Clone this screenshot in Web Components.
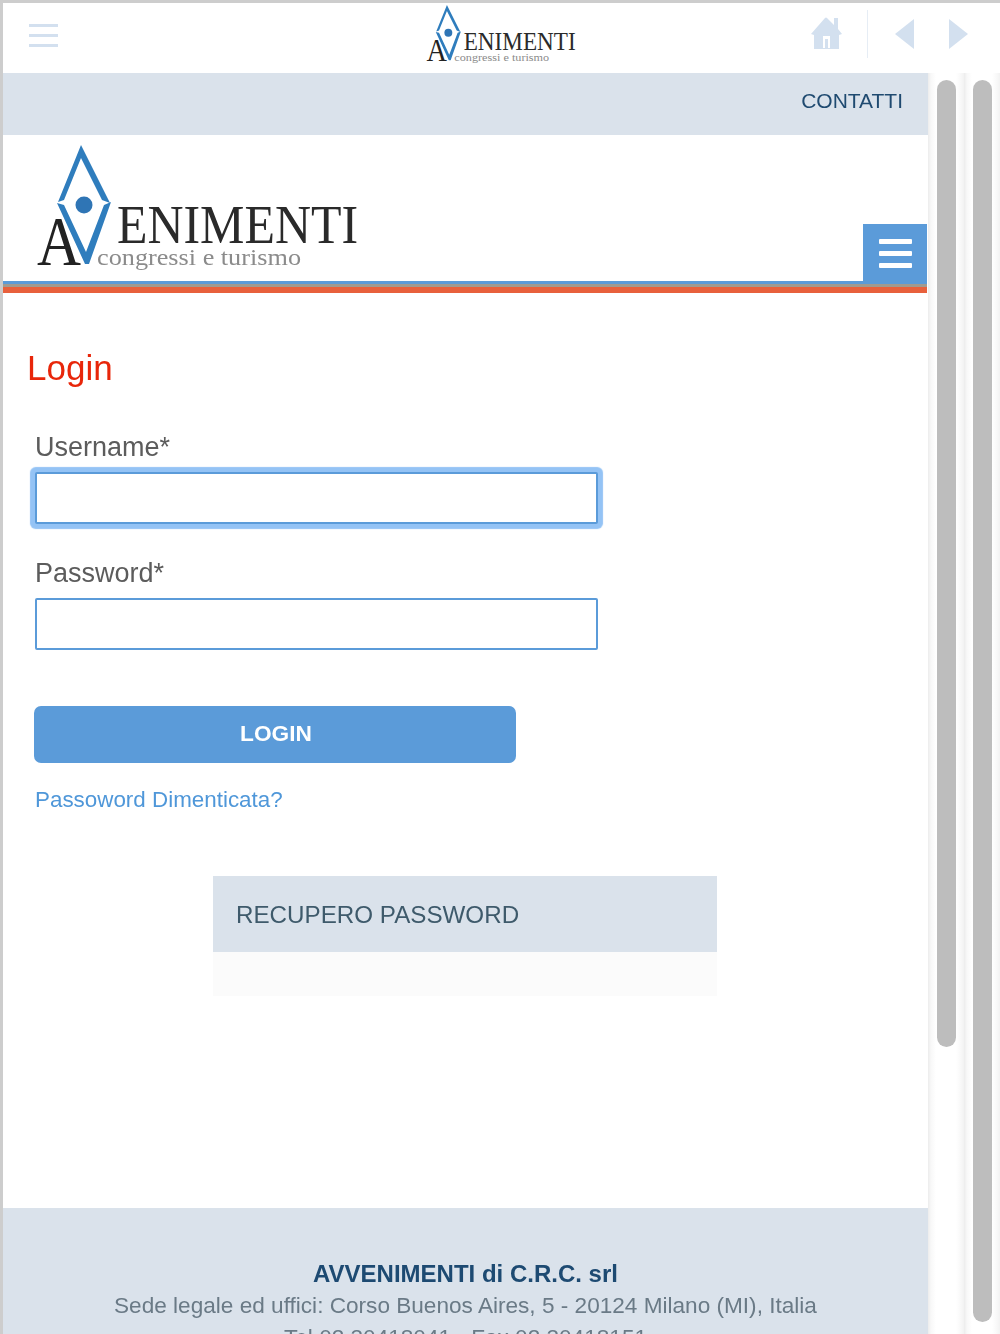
<!DOCTYPE html>
<html lang="it">
<head>
<meta charset="utf-8">
<title>Login</title>
<style>
html, body { margin: 0; height: 100%; overflow: hidden; background: #fff; }
body { font-family: "Liberation Sans", Arial, sans-serif; }
</style>
</head>
<body>
<app-shell>
  <top-bar slot="top"></top-bar>
  <sub-bar>CONTATTI</sub-bar>
  <site-header></site-header>
  <login-form></login-form>
  <recover-panel>RECUPERO PASSWORD</recover-panel>
  <site-footer></site-footer>
</app-shell>

<script>
function define(name, html) {
  customElements.define(name, class extends HTMLElement {
    constructor() {
      super();
      this.attachShadow({ mode: "open" }).innerHTML = html;
    }
  });
}

const PALE = "#d3e0ef";
const BAND = "#dae2eb";
const BLUE = "#5b9bd9";

define("app-shell", `
<style>
:host { display: block; height: 1334px; box-sizing: border-box; border-top: 3px solid #cdcdcd; border-left: 3px solid #cdcdcd; overflow: hidden; filter: blur(.45px); }
.row { display: flex; height: 1261px; }
main { width: 925px; flex: none; overflow: hidden; }
</style>
<slot name="top"></slot>
<div class="row">
  <main><slot></slot></main>
  <fake-scroll style="--thumb:967px"></fake-scroll>
  <fake-scroll style="--thumb:1242px"></fake-scroll>
</div>`);

define("fake-scroll", `
<style>
:host { display: block; width: 36px; flex: none; box-sizing: border-box; padding: 7px 8px 0 9px; background: linear-gradient(90deg, #ececec 0, #f8f8f8 3px, #fff 8px, #fff 28px, #f8f8f8 33px, #f2f2f2 36px); }
div { height: var(--thumb); background: #bdbdbd; border-radius: 10px; }
</style>
<div></div>`);

define("av-logo", `
<style>
:host { display: block; width: calc(325px * var(--scale, 1)); height: calc(130px * var(--scale, 1)); }
svg { display: block; width: 100%; height: 100%; overflow: visible; }
text { font-family: "Liberation Serif", "Times New Roman", serif; }
</style>
<svg viewBox="0 0 325 130" aria-label="Avvenimenti">
  <text x="1" y="122" font-size="70" textLength="44" lengthAdjust="spacingAndGlyphs" fill="#222">A</text>
  <path d="M45 2 L22 59 L28 57 L45 15 L66 57 L74 60 Z" fill="#2f7dbd"/>
  <path d="M21 60 L49 121 L53 121 L75 59 L68 62 L50 109 L28 62 Z" fill="#2f7dbd"/>
  <circle cx="48" cy="62" r="8.5" fill="#2f75b5"/>
  <text x="81" y="100" font-size="54" textLength="241" lengthAdjust="spacingAndGlyphs" fill="#2a2a2a">ENIMENTI</text>
  <text x="61" y="122" font-size="24" textLength="204" lengthAdjust="spacingAndGlyphs" fill="#8b8b8b">congressi e turismo</text>
</svg>`);

define("top-bar", `
<style>
:host { display: grid; grid-template-columns: 1fr auto 1fr; align-items: center; height: 70px; box-sizing: border-box; padding-bottom: 9px; background: #fff; }
.menu { display: flex; flex-direction: column; gap: 7px; width: 29px; margin: 3px 0 0 26px; }
.menu i { display: block; height: 3px; background: ${PALE}; }
av-logo { --scale: .465; margin-top: 1px; }
.tools { display: flex; align-items: center; justify-content: flex-end; }
svg { display: block; fill: ${PALE}; }
.sep { width: 1px; height: 48px; background: #e6edf5; margin: 0 27px 0 25px; }
</style>
<div class="menu"><i></i><i></i><i></i></div>
<av-logo></av-logo>
<div class="tools">
  <svg width="31" height="32" viewBox="0 0 31 32" style="margin-top:-2px"><path fill-rule="evenodd" d="M0 17 L14 1 Q15 0 16 1 L23 8 V1 H27 V12 L31 17 L28 18 V32 H3 V18 Z M12 31 H19 V19 H12 Z"/><path d="M14 22 H17 V31 H14 Z"/></svg>
  <div class="sep"></div>
  <svg width="19" height="30" viewBox="0 0 19 30"><path d="M19 0 V30 L0 15 Z"/></svg>
  <svg width="19" height="30" viewBox="0 0 19 30" style="margin:0 32px 0 35px"><path d="M0 0 V30 L19 15 Z"/></svg>
</div>`);

define("sub-bar", `
<style>
:host { display: flex; align-items: center; justify-content: flex-end; height: 62px; box-sizing: border-box; padding: 0 25px 6px 0; background: ${BAND}; color: #1f4a70; font-size: 21px; }
</style>
<slot></slot>`);

define("site-header", `
<style>
:host { display: block; }
.head { display: flex; align-items: flex-end; justify-content: space-between; height: 146px; }
av-logo { margin: 0 0 8px 33px; }
button { display: flex; flex-direction: column; justify-content: center; align-items: center; gap: 7px; width: 64px; height: 60px; margin: 0 1px -3px 0; padding: 0 0 2px; border: 0; background: ${BLUE}; position: relative; }
button i { display: block; width: 33px; height: 5px; background: #fff; border-radius: 1px; }
.stripe { height: 12px; margin-right: 1px; background: linear-gradient(#5b9bd9 0 3px, #a09a90 3px 6px, #e8603c 6px); }
</style>
<div class="head">
  <av-logo></av-logo>
  <button aria-label="Menu"><i></i><i></i><i></i></button>
</div>
<div class="stripe"></div>`);

define("login-form", `
<style>
:host { display: block; color: #5c5c5c; }
h1 { margin: 55px 0 44px 24px; font-size: 35px; line-height: 40px; font-weight: 400; color: #e8260a; }
form { margin: 0 0 0 32px; }
label { display: block; font-size: 27px; line-height: 30px; margin-bottom: 10px; }
input { display: block; box-sizing: border-box; width: 563px; height: 52px; margin: 0 0 34px; border: 2px solid ${BLUE}; border-radius: 2px; background: #fff; outline: none; }
input.focus { box-shadow: 0 0 1px 4.5px #94c3f5; }
button { display: block; width: 482px; height: 57px; margin: 56px 0 23px -1px; border: 0; border-radius: 7px; background: ${BLUE}; color: #fff; padding: 0 0 2px 2px; font: 700 22.7px/55px "Liberation Sans", Arial, sans-serif; }
a { display: block; font-size: 22.4px; line-height: 28px; color: #4f97d9; text-decoration: none; }
</style>
<h1>Login</h1>
<form>
  <label for="u">Username*</label>
  <input id="u" class="focus" type="text">
  <label for="p">Password*</label>
  <input id="p" type="password" style="margin-bottom:0">
  <button type="button">LOGIN</button>
  <a href="#">Passoword Dimenticata?</a>
</form>`);

define("recover-panel", `
<style>
:host { display: block; width: 504px; margin: 62px 0 0 210px; background: #fbfbfb; padding-bottom: 44px; }
div { height: 76px; line-height: 78px; padding-left: 23px; background: ${BAND}; color: #3e5a6b; font-size: 24.2px; }
</style>
<div><slot></slot></div>`);

define("site-footer", `
<style>
:host { display: block; margin-top: 212px; padding: 50px 0 20px; background: ${BAND}; text-align: center; color: #6a7a86; font-size: 22.6px; line-height: 32px; }
strong { display: block; color: #1d4a72; font-size: 24px; }
</style>
<strong>AVVENIMENTI di C.R.C. srl</strong>
<div>Sede legale ed uffici: Corso Buenos Aires, 5 - 20124 Milano (MI), Italia</div>
<div>Tel 02 30418041 - Fax 02 30418151</div>`);
</script>
</body>
</html>
